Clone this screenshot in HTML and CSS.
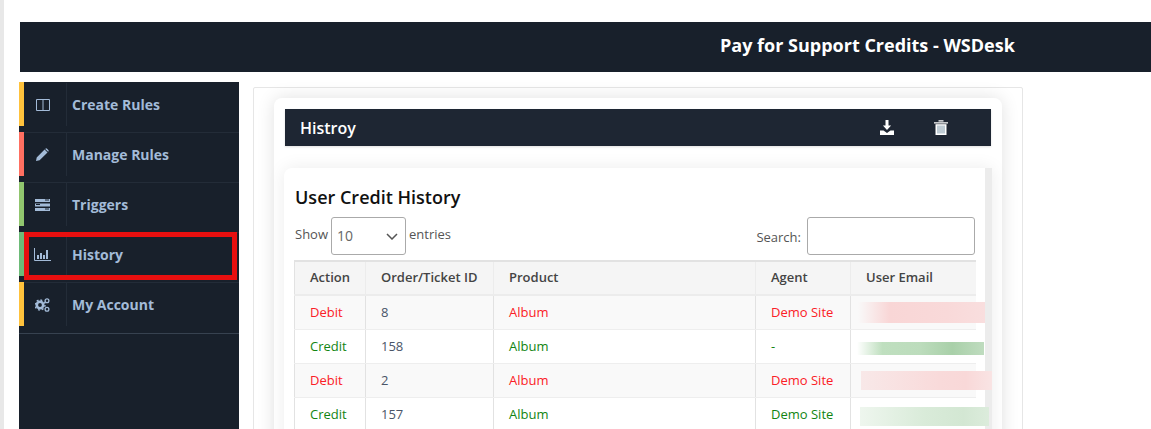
FILE: index.html
```html
<!DOCTYPE html>
<html lang="en">
<head>
    <meta charset="UTF-8">
    <title>Pay for Support Credits - WSDesk</title>
    <link rel="stylesheet" href="styles.css">
</head>
<body>
    <div class="page">
        <div class="header">Pay for Support Credits - WSDesk</div>
        <div class="content">
            <div class="sidebar">
                <a class="nav-item yellow">
                    <span class="nav-icon">
                        <svg width="14" height="12" viewBox="0 0 14 12"><path d="M0.5 0.5h13v11h-13zM7 0.5v11" fill="none" stroke="#a3bbd8" stroke-width="1"/></svg>
                    </span>
                    <span class="nav-text">Create Rules</span>
                </a>
                <a class="nav-item red">
                    <span class="nav-icon">
                        <svg width="13" height="13" viewBox="0 0 13 13"><path d="M0 13l0.7-3.6L8.6 1.5l2.9 2.9L3.6 12.3zM9.4 0.7a1.2 1.2 0 0 1 1.7 0l1.2 1.2a1.2 1.2 0 0 1 0 1.7l-0.2 0.2-2.9-2.9z" fill="#a3bbd8"/></svg>
                    </span>
                    <span class="nav-text">Manage Rules</span>
                </a>
                <a class="nav-item green">
                    <span class="nav-icon">
                        <svg width="15" height="12" viewBox="0 0 15 12"><path d="M0 0h15v3H0zM0 4.5h15v3H0zM0 9h15v3H0z" fill="#a3bbd8"/><path d="M10 1h4M1 5.5h4M10 10h4" stroke="#18202b" stroke-width="1"/></svg>
                    </span>
                    <span class="nav-text">Triggers</span>
                </a>
                <a class="nav-item teal">
                    <span class="nav-icon">
                        <svg width="17" height="13" viewBox="0 0 17 13"><path d="M0.5 0v12.5H17" fill="none" stroke="#a3bbd8" stroke-width="1"/><path d="M3 7h2v4H3zM6 5h2v6H6zM9 7h2v4H9zM12 2h2v9h-2z" fill="#a3bbd8"/></svg>
                    </span>
                    <span class="nav-text">History</span>
                    <span class="highlight"></span>
                </a>
                <a class="nav-item yellow">
                    <span class="nav-icon">
                        <svg width="15" height="14" viewBox="0 0 15 14">
                            <circle cx="5" cy="7" r="3.2" fill="none" stroke="#a3bbd8" stroke-width="2.6"/>
                            <circle cx="5" cy="7" r="5" fill="none" stroke="#a3bbd8" stroke-width="1.4" stroke-dasharray="1.9 2"/>
                            <circle cx="12" cy="2.8" r="1.9" fill="none" stroke="#a3bbd8" stroke-width="1.3"/>
                            <circle cx="12" cy="11.2" r="1.9" fill="none" stroke="#a3bbd8" stroke-width="1.3"/>
                        </svg>
                    </span>
                    <span class="nav-text">My Account</span>
                </a>
                <div class="sidebar-line"></div>
            </div>

            <div class="panel">
                <div class="panel-inner">
                    <div class="bar">
                        <span class="bar-title">Histroy</span>
                        <span class="bar-icon download">
                            <svg width="14" height="15" viewBox="0 0 14 15"><path d="M5.5 0h3v5.5h2.6L7 10 2.9 5.5h2.6z" fill="#fff"/><path d="M0 10.5h3.5L7 13l3.5-2.5H14V15H0z" fill="#fff"/></svg>
                        </span>
                        <span class="bar-icon">
                            <svg width="14" height="15" viewBox="0 0 14 15"><path d="M0 2.2h14v1.2H0zM4.5 0.2h5v1.2h-5z" fill="#fff"/><path d="M1.5 4.2h11V15h-11z" fill="#fff"/><path d="M4 5.5v8M6 5.5v8M8 5.5v8M10 5.5v8" stroke="#7f97a8" stroke-width="1"/></svg>
                        </span>
                    </div>

                    <div class="history-wrap">
                        <div class="history-card">
                            <h2 class="card-title">User Credit History</h2>
                            <div class="controls">
                                <div class="length">
                                    <span>Show</span>
                                    <div class="select-box">
                                        <span>10</span>
                                        <svg width="12" height="7" viewBox="0 0 12 7"><path d="M1 1l5 5 5-5" fill="none" stroke="#555" stroke-width="1.5"/></svg>
                                    </div>
                                    <span>entries</span>
                                </div>
                                <div class="search">
                                    <span>Search:</span>
                                    <div class="search-box"></div>
                                </div>
                            </div>
                            <table class="history-table">
                                <thead>
                                    <tr>
                                        <th class="col-action">Action</th>
                                        <th class="col-order">Order/Ticket ID</th>
                                        <th class="col-product">Product</th>
                                        <th class="col-agent">Agent</th>
                                        <th class="col-email">User Email</th>
                                    </tr>
                                </thead>
                                <tbody>
                                    <tr class="debit">
                                        <td>Debit</td><td class="order">8</td><td>Album</td><td>Demo Site</td>
                                        <td><span class="blur blur-a"></span></td>
                                    </tr>
                                    <tr class="credit">
                                        <td>Credit</td><td class="order">158</td><td>Album</td><td>-</td>
                                        <td><span class="blur blur-b"></span></td>
                                    </tr>
                                    <tr class="debit">
                                        <td>Debit</td><td class="order">2</td><td>Album</td><td>Demo Site</td>
                                        <td><span class="blur blur-c"></span></td>
                                    </tr>
                                    <tr class="credit">
                                        <td>Credit</td><td class="order">157</td><td>Album</td><td>Demo Site</td>
                                        <td><span class="blur blur-d"></span></td>
                                    </tr>
                                </tbody>
                            </table>
                        </div>
                        <div class="scrollbar"></div>
                    </div>
                </div>
            </div>
        </div>
    </div>
</body>
</html>
```

FILE: styles.css
```css
* {
    margin: 0;
    padding: 0;
    box-sizing: border-box;
}

html, body {
    height: 429px;
    overflow: hidden;
}

body {
    font-family: "Open Sans", sans-serif;
    background-color: #fff;
    font-size: 13px;
}

.page {
    border-left: 4px solid #e8e8e8;
    height: 429px;
    overflow: hidden;
    padding: 22px 0 0 15px;
}

.header {
    margin-left: 1px;
    height: 50px;
    background-color: #18202b;
    color: #fff;
    font-size: 18px;
    font-weight: 700;
    line-height: 46px;
    padding-left: 700px;
}

.content {
    display: flex;
    margin-top: 10px;
    align-items: flex-start;
}

/* sidebar */
.sidebar {
    width: 220px;
    height: 347px;
    flex-shrink: 0;
    background-color: #18202b;
}

.nav-item {
    position: relative;
    display: flex;
    height: 50px;
    border-left: 5px solid #18202b;
    border-top: 1px solid #232c38;
    align-items: flex-start;
}

.nav-item:first-child {
    border-top-color: #18202b;
}

.nav-item::before {
    content: "";
    position: absolute;
    left: -5px;
    top: -1px;
    width: 5px;
    height: 44px;
}

.yellow::before { background-color: #ffc23c; }
.red::before { background-color: #ff6f61; }
.green::before { background-color: #90c56e; }
.teal::before { background-color: #6dbb78; }

.nav-icon {
    width: 43px;
    height: 43px;
    border-right: 1px solid #232c38;
    padding-right: 5px;
    display: flex;
    align-items: center;
    justify-content: center;
}

.nav-text {
    padding-left: 5px;
    line-height: 44px;
    font-size: 14px;
    font-weight: 700;
    color: #a3bbd8;
}

.highlight {
    position: absolute;
    left: 0;
    top: -1px;
    width: 213px;
    height: 48px;
    border: 5px solid #e80f0f;
}

.sidebar-line {
    margin-top: 1px;
    height: 1px;
    background-color: #374250;
}

/* main panel */
.panel {
    margin: 5px 0 0 14px;
    width: 770px;
    height: 360px;
    border: 1px solid #e6e6e6;
    border-radius: 2px;
    padding: 10px 20px;
}

.panel-inner {
    height: 360px;
    background-color: #fff;
    border-radius: 8px;
    box-shadow: 0 0 18px rgba(0, 0, 0, 0.12);
    padding: 11px 11px 0;
}

.bar {
    height: 37px;
    display: flex;
    align-items: center;
    background-color: #1e2633;
    color: #fff;
    box-shadow: 0 1px 2px rgba(0, 0, 0, 0.12);
}

.bar-title {
    flex: 1;
    padding-left: 15px;
    font-size: 16px;
    font-weight: 600;
}

.bar-icon {
    width: 14px;
    height: 15px;
    margin-right: 43px;
    margin-bottom: 1px;
}

.bar-icon.download {
    margin-right: 40px;
}

.history-wrap {
    position: relative;
    margin: 22px 0 0 -1px;
    width: 708px;
    height: 300px;
    display: flex;
    background-color: #fff;
    border-radius: 8px 0 0 0;
    box-shadow: 0 0 18px rgba(0, 0, 0, 0.08);
}

.history-card {
    width: 701px;
    padding: 17px 10px 0;
}

.scrollbar {
    width: 7px;
    background-color: #ececec;
}

.card-title {
    padding-left: 1px;
    font-size: 18px;
    font-weight: 600;
    color: #111;
    line-height: 24px;
}

.controls {
    margin-top: 8px;
    height: 38px;
    padding-left: 1px;
    display: flex;
    justify-content: space-between;
    color: #555;
    font-size: 13px;
}

.length {
    display: flex;
    gap: 3px;
    align-items: flex-start;
    line-height: 34px;
}

.select-box {
    width: 75px;
    height: 38px;
    border: 1px solid #aaa;
    border-radius: 3px;
    display: flex;
    align-items: center;
    justify-content: space-between;
    padding: 0 7px 0 5px;
    font-size: 14px;
    color: #666;
}

.search {
    display: flex;
    gap: 6px;
    line-height: 41px;
}

.search-box {
    width: 168px;
    height: 38px;
    border: 1px solid #aaa;
    border-radius: 3px;
}

.history-table {
    margin-top: 5px;
    width: 681px;
    table-layout: fixed;
    border-collapse: collapse;
    border-left: 1px solid #e2e2e2;
    border-top: 2px solid #e2e2e2;
}

.col-action { width: 71px; }
.col-order { width: 128px; }
.col-product { width: 262px; }
.col-agent { width: 95px; }
.col-email { width: 125px; }

.history-table th {
    height: 34px;
    background-color: #f5f5f5;
    border-bottom: 2px solid #ececec;
    border-right: 1px solid #ececec;
    text-align: left;
    padding: 0 0 2px 15px;
    font-size: 13px;
    font-weight: 600;
    color: #444;
}

.history-table th:last-child,
.history-table td:last-child {
    border-right: none;
}

.history-table td {
    height: 34px;
    border-bottom: 1px solid #eee;
    border-right: 1px solid #e2e2e2;
    padding-left: 15px;
    font-size: 13px;
}

.debit td {
    background-color: #f9f9f9;
    color: #fb2026;
}

.credit td {
    background-color: #fff;
    color: #128512;
}

.history-table td.order {
    color: #4a5568;
}

.history-table td:last-child {
    position: relative;
}

.blur {
    position: absolute;
    display: block;
}

.blur-a {
    left: 7px;
    top: 6px;
    width: 127px;
    height: 21px;
    background: linear-gradient(90deg, rgba(250, 215, 215, 0), #f9d6d6 25%, #f9d9d9 70%, #f9dede);
}

.blur-b {
    left: 6px;
    top: 12px;
    width: 127px;
    height: 13px;
    background: linear-gradient(90deg, rgba(190, 220, 190, 0), #bfdfbf 20%, #bcdcbc 50%, #a9d0a9 75%, #bfdcbf);
}

.blur-c {
    left: 10px;
    top: 7px;
    width: 131px;
    height: 19px;
    background: linear-gradient(90deg, #f8e8e8, #f9dada 60%, #f9d8d8 80%, #f9e4e4);
}

.blur-d {
    left: 9px;
    top: 9px;
    width: 129px;
    height: 19px;
    background: linear-gradient(90deg, #eef6ee, #d9ebd9 50%, #d3e7d3 80%, #dcecdc);
}
```
